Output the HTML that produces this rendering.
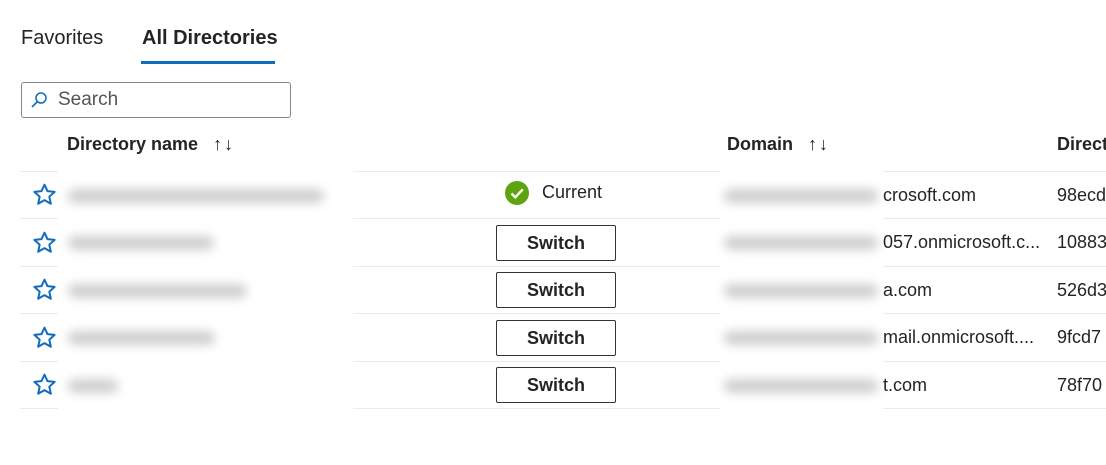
<!DOCTYPE html><html><head><style>
body{margin:0;width:1106px;height:465px;background:#fff;font-family:"Liberation Sans",sans-serif;color:#242424;position:relative;overflow:hidden}
.a{position:absolute;white-space:nowrap}
.line{position:absolute;left:20px;width:1086px;height:1px;background:#ebebeb}
.btn{position:absolute;left:496px;width:118px;height:34px;border:1px solid #333;border-radius:2px;font-size:18px;font-weight:bold;text-align:center;line-height:34px;background:#fff}
.blur{position:absolute;height:14px;background:#cfcfcf;filter:blur(5px);border-radius:7px}
.star{position:absolute;left:32px}
.t{font-size:18px}
</style></head><body>
<div class="a" style="left:21px;top:27px;font-size:20px">Favorites</div>
<div class="a" style="left:142px;top:27px;font-size:20px;font-weight:bold">All Directories</div>
<div class="a" style="left:141px;top:61px;width:134px;height:3px;background:#0f6cbd"></div>
<div class="a" style="left:21px;top:82px;width:268px;height:34px;border:1px solid #888;border-radius:3px"></div>
<svg class="a" style="left:30px;top:91px" width="18" height="18" viewBox="0 0 18 18"><circle cx="11" cy="7" r="5" fill="none" stroke="#0f6cbd" stroke-width="1.5"/><path d="M7.5 10.5 2 16" stroke="#0f6cbd" stroke-width="1.6"/></svg>
<div class="a" style="left:58px;top:89px;font-size:19px;color:#555">Search</div>
<div class="a" style="left:67px;top:134px;font-size:18px;font-weight:bold">Directory name <span style="font-weight:normal;margin-left:10px;letter-spacing:2px">↑↓</span></div>
<div class="a" style="left:727px;top:134px;font-size:18px;font-weight:bold">Domain <span style="font-weight:normal;margin-left:10px;letter-spacing:2px">↑↓</span></div>
<div class="a" style="left:1057px;top:134px;font-size:18px;font-weight:bold">Directory ID</div>
<div class="line" style="top:171px"></div><div class="line" style="top:218px"></div><div class="line" style="top:266px"></div><div class="line" style="top:313px"></div><div class="line" style="top:361px"></div><div class="line" style="top:408px"></div>
<div class="a" style="left:58px;top:170px;width:295px;height:240px;background:#fff"></div>
<div class="a" style="left:720px;top:167px;width:163px;height:243px;background:#fff"></div>
<div class="blur" style="left:68px;top:189px;width:256px"></div>
<div class="blur" style="left:68px;top:236px;width:146px"></div>
<div class="blur" style="left:68px;top:284px;width:179px"></div>
<div class="blur" style="left:68px;top:331px;width:147px"></div>
<div class="blur" style="left:68px;top:379px;width:50px"></div>
<div class="blur" style="left:724px;top:189px;width:154px"></div>
<div class="blur" style="left:724px;top:236px;width:154px"></div>
<div class="blur" style="left:724px;top:284px;width:154px"></div>
<div class="blur" style="left:724px;top:331px;width:154px"></div>
<div class="blur" style="left:724px;top:379px;width:154px"></div>
<svg class="star" style="top:182px" width="25" height="25" viewBox="0 0 24 24"><path d="M12 2.5l2.9 6.3 6.8.7-5.1 4.6 1.5 6.8L12 17.4l-6.1 3.5 1.5-6.8-5.1-4.6 6.8-.7z" fill="none" stroke="#0f6cbd" stroke-width="1.9" stroke-linejoin="round"/></svg>
<svg class="star" style="top:230px" width="25" height="25" viewBox="0 0 24 24"><path d="M12 2.5l2.9 6.3 6.8.7-5.1 4.6 1.5 6.8L12 17.4l-6.1 3.5 1.5-6.8-5.1-4.6 6.8-.7z" fill="none" stroke="#0f6cbd" stroke-width="1.9" stroke-linejoin="round"/></svg>
<svg class="star" style="top:277px" width="25" height="25" viewBox="0 0 24 24"><path d="M12 2.5l2.9 6.3 6.8.7-5.1 4.6 1.5 6.8L12 17.4l-6.1 3.5 1.5-6.8-5.1-4.6 6.8-.7z" fill="none" stroke="#0f6cbd" stroke-width="1.9" stroke-linejoin="round"/></svg>
<svg class="star" style="top:325px" width="25" height="25" viewBox="0 0 24 24"><path d="M12 2.5l2.9 6.3 6.8.7-5.1 4.6 1.5 6.8L12 17.4l-6.1 3.5 1.5-6.8-5.1-4.6 6.8-.7z" fill="none" stroke="#0f6cbd" stroke-width="1.9" stroke-linejoin="round"/></svg>
<svg class="star" style="top:372px" width="25" height="25" viewBox="0 0 24 24"><path d="M12 2.5l2.9 6.3 6.8.7-5.1 4.6 1.5 6.8L12 17.4l-6.1 3.5 1.5-6.8-5.1-4.6 6.8-.7z" fill="none" stroke="#0f6cbd" stroke-width="1.9" stroke-linejoin="round"/></svg>
<svg class="a" style="left:505px;top:181px" width="24" height="24" viewBox="0 0 24 24"><circle cx="12" cy="12" r="12" fill="#5ea40e"/><path d="M6.5 12.5l3.8 3.8 7.5-8" fill="none" stroke="#fff" stroke-width="2.4"/></svg>
<div class="a t" style="left:542px;top:182px">Current</div>
<div class="btn" style="top:225px">Switch</div>
<div class="btn" style="top:272px">Switch</div>
<div class="btn" style="top:320px">Switch</div>
<div class="btn" style="top:367px">Switch</div>
<div class="a t" style="left:883px;top:185px">crosoft.com</div>
<div class="a t" style="left:883px;top:232px">057.onmicrosoft.c...</div>
<div class="a t" style="left:883px;top:280px">a.com</div>
<div class="a t" style="left:883px;top:327px">mail.onmicrosoft....</div>
<div class="a t" style="left:883px;top:375px">t.com</div>
<div class="a t" style="left:1057px;top:185px">98ecd</div>
<div class="a t" style="left:1057px;top:232px">10883</div>
<div class="a t" style="left:1057px;top:280px">526d3</div>
<div class="a t" style="left:1057px;top:327px">9fcd7</div>
<div class="a t" style="left:1057px;top:375px">78f70</div>
</body></html>
